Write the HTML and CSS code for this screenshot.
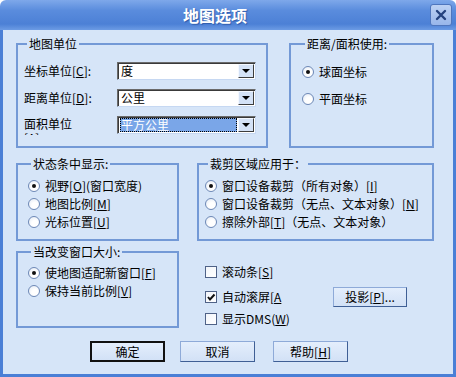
FILE: index.html
```html
<!DOCTYPE html>
<html lang="zh-CN">
<head>
  <meta charset="UTF-8" />
  <title>地图选项</title>
  <link rel="stylesheet" href="styles.css">
</head>
<body>
<div class="window">
  <div class="titlebar">
    <div class="title">地图选项</div>
    <div class="close">
      <svg width="12" height="12" viewBox="0 0 12 12"><path d="M2 2 L10 10 M10 2 L2 10" stroke="#24427e" stroke-width="2.4" stroke-linecap="round"/></svg>
    </div>
  </div>

  <div class="body">
    <div class="row row-top">
      <fieldset class="group units">
        <legend>地图单位</legend>
        <div class="field">
          <label class="label">坐标单位[<u>C</u>]:</label>
          <div class="combo"><span class="value">度</span><span class="arrow"></span></div>
        </div>
        <div class="field">
          <label class="label">距离单位[<u>D</u>]:</label>
          <div class="combo"><span class="value">公里</span><span class="arrow"></span></div>
        </div>
        <div class="field">
          <label class="label clip">面积单位[<u>A</u>]:</label>
          <div class="combo"><span class="value selected">平方公里</span><span class="arrow"></span></div>
        </div>
      </fieldset>

      <fieldset class="group measure">
        <legend>距离/面积使用:</legend>
        <div class="option"><span class="radio on"></span>球面坐标</div>
        <div class="option"><span class="radio"></span>平面坐标</div>
      </fieldset>
    </div>

    <div class="row row-mid">
      <fieldset class="group status">
        <legend>状态条中显示:</legend>
        <div class="option"><span class="radio on"></span>视野[<u>O</u>](窗口宽度)</div>
        <div class="option"><span class="radio"></span>地图比例[<u>M</u>]</div>
        <div class="option"><span class="radio"></span>光标位置[<u>U</u>]</div>
      </fieldset>

      <fieldset class="group clipping">
        <legend>裁剪区域应用于：</legend>
        <div class="option"><span class="radio on"></span>窗口设备裁剪（所有对象）[<u>I</u>]</div>
        <div class="option"><span class="radio"></span>窗口设备裁剪（无点、文本对象）[<u>N</u>]</div>
        <div class="option"><span class="radio"></span>擦除外部[<u>T</u>]（无点、文本对象）</div>
      </fieldset>
    </div>

    <div class="row row-low">
      <fieldset class="group resize">
        <legend>当改变窗口大小:</legend>
        <div class="option"><span class="radio on"></span>使地图适配新窗口[<u>F</u>]</div>
        <div class="option"><span class="radio"></span>保持当前比例[<u>V</u>]</div>
      </fieldset>

      <div class="checks">
        <div class="check"><span class="box"></span>滚动条[<u>S</u>]</div>
        <div class="check-row">
          <div class="check wide">
            <span class="box">
              <svg width="10" height="10" viewBox="0 0 10 10"><path d="M2 5 L4 7.5 L8.5 2.5" fill="none" stroke="#111" stroke-width="2"/></svg>
            </span>自动滚屏[<u>A</u>
          </div>
          <button class="btn small">投影[<u>P</u>]...</button>
        </div>
        <div class="check last"><span class="box"></span>显示DMS(<u>W</u>)</div>
      </div>
    </div>

    <div class="actions">
      <button class="btn default">确定</button>
      <button class="btn">取消</button>
      <button class="btn help">帮助[<u>H</u>]</button>
    </div>
  </div>
</div>
</body>
</html>
```

FILE: styles.css
```css
:root {
  --xp-blue: #4a7fd6;
  --xp-face: #d6e5f8;
  --xp-line: #7399d6;
}

body {
  margin: 0;
  font-family: "Noto Sans CJK SC", "DejaVu Sans", sans-serif;
  font-size: 12px;
  line-height: 14px;
  color: #000;
}

.window {
  width: 456px;
  height: 377px;
  overflow: hidden;
}

.titlebar {
  height: 30px;
  display: flex;
  align-items: center;
  background: linear-gradient(#7ea8ea, #5a8cdd 35%, #4c80d6 80%, #6c9be4);
  border-radius: 6px 6px 0 0;
  padding-right: 4px;
  box-sizing: border-box;
}

.title {
  flex: 1;
  text-align: center;
  color: #fff;
  font-size: 16px;
  font-weight: bold;
  line-height: 20px;
  text-shadow: 1px 1px 1px #2f5cab;
}

.close {
  width: 20px;
  height: 20px;
  display: flex;
  align-items: center;
  justify-content: center;
  background: linear-gradient(#bdd1f3, #98b6ea);
  border: 1px solid #4f76bd;
  border-radius: 3px;
}

.body {
  height: 347px;
  box-sizing: border-box;
  background: var(--xp-face);
  border: 3px solid var(--xp-blue);
  border-top: none;
  padding: 7px 0 0 13px;
}

.row {
  display: flex;
}

.row-top { gap: 21px; }
.row-mid { gap: 18px; margin-top: 9px; }
.row-low { gap: 26px; margin-top: 4px; }

/* group boxes */
.group {
  margin: 0;
  padding: 0;
  min-width: 0;
  box-sizing: border-box;
  border: 2px solid var(--xp-line);
}

.group legend {
  margin-left: 3px;
  padding: 0 2px;
  line-height: 14px;
}

.units { width: 252px; height: 111px; padding: 11px 10px 0 6px; }
.measure { width: 145px; height: 111px; padding: 13px 0 0 11px; }
.status { width: 163px; height: 84px; padding: 7px 0 0 10px; }
.clipping { width: 237px; height: 84px; padding: 7px 0 0 6px; }
.resize { width: 163px; height: 83px; padding: 6px 0 0 10px; }

.field {
  display: flex;
  align-items: center;
  height: 18px;
  margin-bottom: 9px;
}

.label {
  width: 93px;
}

.label.clip {
  height: 19px;
  width: 50px;
  margin-right: 43px;
  overflow: hidden;
  align-self: flex-start;
  padding-top: 1px;
  box-sizing: border-box;
}

.combo {
  width: 139px;
  height: 18px;
  box-sizing: border-box;
  display: flex;
  align-items: center;
  background: #fff;
  border: 1px solid;
  border-color: #6b6b6b #c6d8f2 #c6d8f2 #6b6b6b;
  box-shadow: inset 1px 1px 0 #3a3a3a;
  padding: 1px 1px 1px 2px;
}

.value {
  flex: 1;
  height: 14px;
  padding-left: 1px;
  line-height: 14px;
}

.value.selected {
  background: #7aa6e8;
  color: #fff;
  outline: 1px dotted #000;
  outline-offset: -1px;
  margin-right: 1px;
}

.arrow {
  width: 16px;
  height: 14px;
  box-sizing: border-box;
  background: #d4e2f6;
  border: 1px solid;
  border-color: #f4f8ff #3d3d3d #3d3d3d #f4f8ff;
  position: relative;
}

.arrow::after {
  content: "";
  position: absolute;
  left: 3px;
  top: 4px;
  border-left: 4px solid transparent;
  border-right: 4px solid transparent;
  border-top: 4px solid #000;
}

/* radios */
.option {
  display: flex;
  align-items: center;
  height: 16px;
  margin-bottom: 2px;
  white-space: nowrap;
}

.measure .option { margin-bottom: 11px; }

.radio {
  width: 12px;
  height: 12px;
  box-sizing: border-box;
  border-radius: 50%;
  border: 1px solid #6d88b6;
  background: radial-gradient(circle at 60% 65%, #fff 35%, #dfe7f3);
  margin-right: 5px;
  position: relative;
  flex: none;
}

.radio.on::after {
  content: "";
  position: absolute;
  left: 3px;
  top: 3px;
  width: 4px;
  height: 4px;
  border-radius: 50%;
  background: #111;
}

/* checkboxes */
.checks {
  padding-top: 19px;
}

.check {
  display: flex;
  align-items: center;
  height: 16px;
  white-space: nowrap;
}

.check.wide { width: 128px; }
.check.last { margin-top: 4px; }

.check-row {
  display: flex;
  align-items: center;
  height: 20px;
  margin-top: 7px;
}

.box {
  width: 12px;
  height: 12px;
  box-sizing: border-box;
  border: 1px solid #4f6287;
  background: linear-gradient(135deg, #f2f5fa, #fff);
  margin-right: 5px;
  display: flex;
  align-items: center;
  justify-content: center;
  flex: none;
}

/* buttons */
.btn {
  font-family: inherit;
  font-size: 12px;
  line-height: 14px;
  color: #000;
  width: 75px;
  height: 21px;
  padding: 0;
  background: linear-gradient(#e4eefc, #d2e1f6);
  border: 1px solid;
  border-color: #8eaad8 #3f5f95 #3f5f95 #8eaad8;
}

.btn.small {
  width: 74px;
  height: 20px;
}

.btn.default {
  border: 2px solid #111;
}

.actions {
  display: flex;
  gap: 15px;
  margin-top: 13px;
  padding-left: 74px;
}

.btn.help { margin-left: 3px; }
```
